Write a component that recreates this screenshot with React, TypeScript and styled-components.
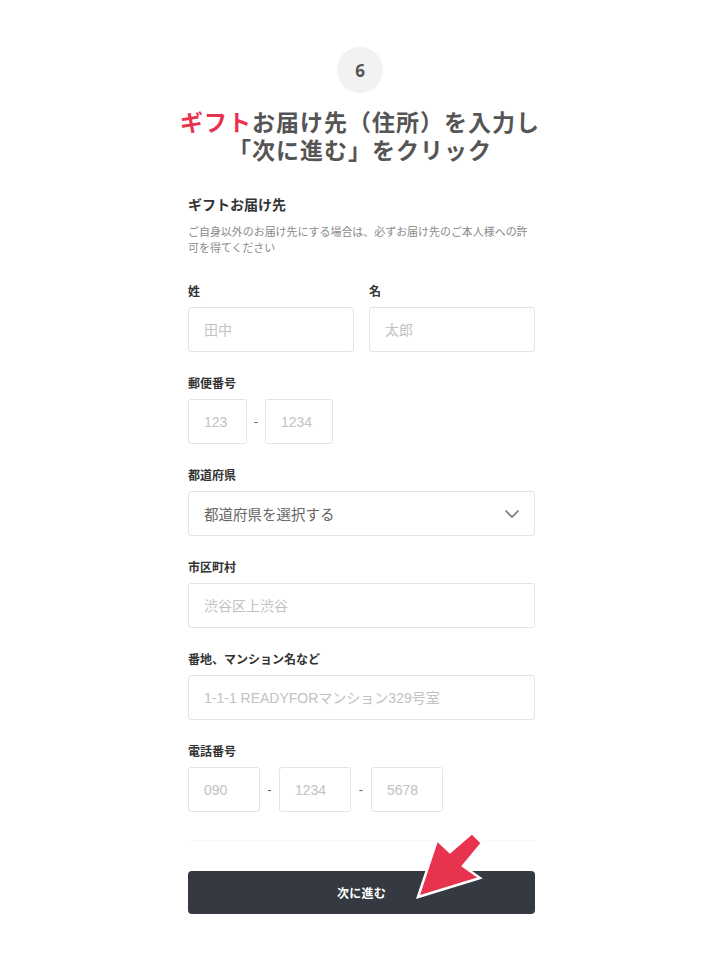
import React from 'react';
import styled, { createGlobalStyle } from 'styled-components';

const GlobalStyle = createGlobalStyle`
  body {
    margin: 0;
    background: #fff;
    font-family: "Noto Sans CJK JP", "Noto Sans", sans-serif;
  }
`;

const Page = styled.div`
  width: 720px;
  min-height: 960px;
  padding-top: 47px;
  box-sizing: border-box;
  display: flex;
  flex-direction: column;
  align-items: center;
  position: relative;
`;

const StepBadge = styled.div`
  width: 46px;
  height: 46px;
  border-radius: 50%;
  background: #f2f2f2;
  color: #555;
  display: flex;
  align-items: center;
  justify-content: center;
  font-family: "Noto Sans", "Liberation Sans", sans-serif;
  font-weight: 700;
  font-size: 17px;
`;

const Title = styled.h1`
  margin: 14px 0 0;
  display: flex;
  flex-direction: column;
  align-items: center;
  font-size: 23px;
  font-weight: 700;
  color: #555;
  letter-spacing: 1px;
`;

const TitleLine = styled.span`
  display: block;
  height: 28px;
  line-height: 28px;
`;

const Accent = styled.span`
  color: #e8334f;
`;

const Form = styled.div`
  width: 347px;
  margin: 31px 0 0 3px;
  display: flex;
  flex-direction: column;
`;

const Heading = styled.h2`
  margin: 0;
  font-size: 14px;
  line-height: 20px;
  font-weight: 700;
  color: #333;
`;

const Note = styled.p`
  margin: 9px 0 0;
  font-size: 11px;
  line-height: 16px;
  color: #8a8a8a;
  letter-spacing: -0.05px;
`;

const Fields = styled.div`
  margin-top: 27px;
  display: flex;
  flex-direction: column;
  gap: 22px;
`;

const Pair = styled.div`
  display: grid;
  grid-template-columns: 1fr 1fr;
  gap: 15px;
`;

const Field = styled.div`
  display: flex;
  flex-direction: column;
  gap: 7px;
`;

const Label = styled.label`
  font-size: 12px;
  line-height: 18px;
  font-weight: 700;
  color: #333;
`;

const Row = styled.div`
  display: flex;
  align-items: center;
`;

const Input = styled.input<{ $w?: number }>`
  box-sizing: border-box;
  width: ${(p) => (p.$w ? `${p.$w}px` : '100%')};
  height: 45px;
  padding: 0 15px;
  border: 1px solid #e4e4e4;
  border-radius: 3px;
  background: #fff;
  font-family: "Liberation Sans", "Noto Sans CJK JP", sans-serif;
  font-size: 14px;
  color: #333;
  outline: none;

  &::placeholder {
    color: #c2c2c2;
  }
`;

const Dash = styled.span<{ $w: number }>`
  width: ${(p) => p.$w}px;
  text-align: center;
  font-family: "Liberation Sans", sans-serif;
  font-size: 13px;
  color: #666;
`;

const SelectBox = styled.div`
  box-sizing: border-box;
  height: 45px;
  padding: 0 14px 0 15px;
  border: 1px solid #e4e4e4;
  border-radius: 3px;
  display: flex;
  align-items: center;
  justify-content: space-between;
  font-size: 14.5px;
  color: #666;
`;

const Separator = styled.div`
  margin-top: 28px;
  height: 1px;
  background: #f8f8f8;
`;

const SubmitButton = styled.button`
  margin-top: 30px;
  height: 43px;
  border: none;
  border-radius: 4px;
  background: #353a42;
  color: #fff;
  font-family: "Noto Sans CJK JP", sans-serif;
  font-size: 12px;
  font-weight: 700;
  letter-spacing: 0.3px;
`;

const ArrowMark = styled.svg`
  position: absolute;
  left: 410px;
  top: 825px;
  width: 80px;
  height: 80px;
`;

const Chevron = () => (
  <svg width="16" height="10" viewBox="0 0 16 10">
    <path d="M1.5 1.5 L8 8 L14.5 1.5" fill="none" stroke="#777" strokeWidth="1.6" />
  </svg>
);

const App: React.FC = () => (
  <>
    <GlobalStyle />
    <Page>
      <StepBadge>6</StepBadge>
      <Title>
        <TitleLine>
          <Accent>ギフト</Accent>お届け先（住所）を入力し
        </TitleLine>
        <TitleLine>「次に進む」をクリック</TitleLine>
      </Title>

      <Form>
        <Heading>ギフトお届け先</Heading>
        <Note>
          ご自身以外のお届け先にする場合は、必ずお届け先のご本人様への許
          <br />
          可を得てください
        </Note>

        <Fields>
          <Pair>
            <Field>
              <Label>姓</Label>
              <Input placeholder="田中" />
            </Field>
            <Field>
              <Label>名</Label>
              <Input placeholder="太郎" />
            </Field>
          </Pair>

          <Field>
            <Label>郵便番号</Label>
            <Row>
              <Input $w={59} placeholder="123" />
              <Dash $w={18}>-</Dash>
              <Input $w={68} placeholder="1234" />
            </Row>
          </Field>

          <Field>
            <Label>都道府県</Label>
            <SelectBox>
              都道府県を選択する
              <Chevron />
            </SelectBox>
          </Field>

          <Field>
            <Label>市区町村</Label>
            <Input placeholder="渋谷区上渋谷" />
          </Field>

          <Field>
            <Label>番地、マンション名など</Label>
            <Input placeholder="1-1-1 READYFORマンション329号室" />
          </Field>

          <Field>
            <Label>電話番号</Label>
            <Row>
              <Input $w={72} placeholder="090" />
              <Dash $w={19}>-</Dash>
              <Input $w={72} placeholder="1234" />
              <Dash $w={20}>-</Dash>
              <Input $w={72} placeholder="5678" />
            </Row>
          </Field>
        </Fields>

        <Separator />
        <SubmitButton>次に進む</SubmitButton>
      </Form>

      <ArrowMark viewBox="410 825 80 80">
        <polygon
          points="418,897 437,840 450,852 472,833 482,843 463,866 480,878"
          fill="#e8334f"
          stroke="#fff"
          strokeWidth="2.5"
          strokeLinejoin="miter"
        />
      </ArrowMark>
    </Page>
  </>
);

export default App;
